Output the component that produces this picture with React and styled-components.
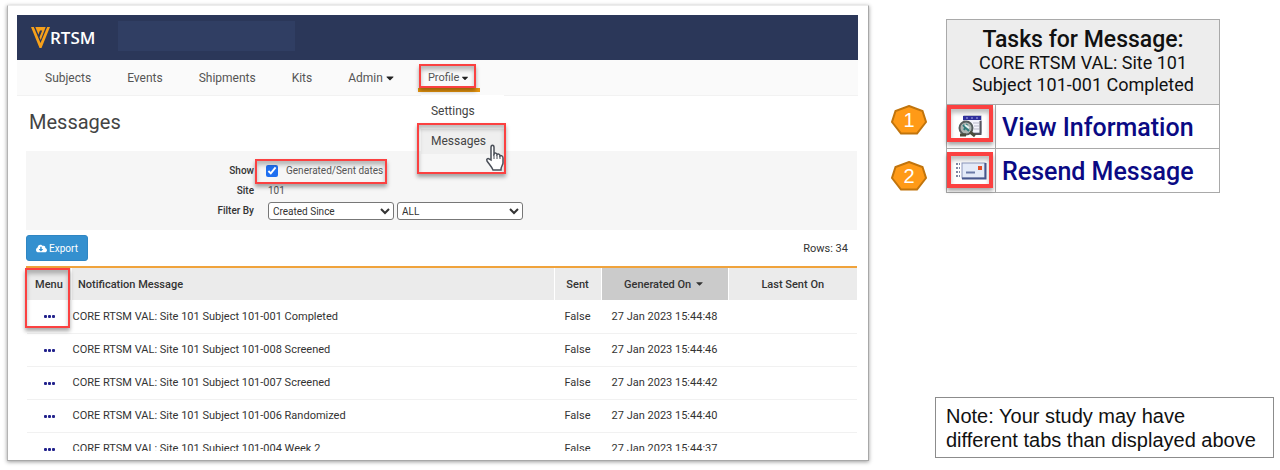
import styled, { createGlobalStyle, css } from 'styled-components';
import { FaCloudDownloadAlt, FaCaretDown } from 'react-icons/fa';

const GlobalStyle = createGlobalStyle`
  * {
    box-sizing: border-box;
  }

  body {
    margin: 0;
    background: #fff;
    color: #333;
    font-family: Roboto, "Liberation Sans", sans-serif;
    font-size: 11px;
  }
`;

// ------------------------------
// Page
// ------------------------------

const Page = styled.div`
  display: grid;
  grid-template-columns: minmax(0, 862fr) minmax(0, 405fr);
  padding: 5px 6px 9px 7px;
`;

const Screen = styled.main`
  padding: 9px 10px 9px 9px;
  border: 1px solid #ccc;
  border-color: #ececec #a8a8a8 #a8a8a8 #b4b4b4;
  box-shadow: 0 1px 4px rgba(0, 0, 0, 0.4);
`;

const Side = styled.aside`
  display: flex;
  flex-direction: column;
  justify-content: space-between;
  padding: 14px 0 3px;
`;

// Red marker drawn over a control
const Marker = styled.span`
  position: absolute;
  inset: ${props => props.$inset || '0'};
  border: ${props => (props.$thick ? 4 : 2)}px solid #fb4141;
  box-shadow: 0 3px 4px rgba(0, 0, 0, 0.35), inset 0 4px 4px rgba(0, 0, 0, 0.25);
  pointer-events: none;
  z-index: 2;
`;

// ------------------------------
// Header and navigation
// ------------------------------

const TopBar = styled.header`
  display: flex;
  align-items: center;
  height: 45px;
  padding: 0 14px;
  background: #2b3759;
`;

const Brand = styled.a`
  display: flex;
  align-items: center;
  width: 87px;
  color: #fff;
  font-family: "Open Sans", sans-serif;
  font-size: 17px;
  font-weight: 600;
  line-height: 24px;
  text-decoration: none;
`;

const StudyBox = styled.div`
  width: 177px;
  height: 30px;
  margin-bottom: 4px;
  background: #303e63;
`;

const Nav = styled.nav`
  display: flex;
  align-items: center;
  gap: 36px;
  height: 36px;
  padding-left: 28px;
  background: #fafafa;
  border-bottom: 1px solid #f2f2f2;
`;

const NavLink = styled.a`
  display: flex;
  align-items: center;
  gap: 1px;
  color: #555;
  font-size: ${props => (props.$small ? 11 : 12)}px;
  line-height: 20px;
  text-decoration: none;

  svg {
    color: #222;
  }
`;

const NavItem = styled.div`
  position: relative;
  display: flex;
  align-items: center;
  height: 35px;
  padding: 0 10px;
  margin-left: -14px;

  &::after {
    content: "";
    position: absolute;
    left: 0;
    right: 0;
    bottom: 3px;
    height: 4px;
    background: #e8960f;
  }
`;

const SubMenu = styled.ul`
  position: absolute;
  top: 35px;
  left: 3px;
  width: 83px;
  margin: 0;
  padding: 1px 0 0;
  background: #fff;
  list-style: none;
  z-index: 1;
`;

const SubMenuItem = styled.li`
  position: relative;
  padding: ${props => (props.$active ? '2px 10px' : '5px 10px')};
  background: ${props => (props.$active ? '#efefef' : '#fff')};
  line-height: 20px;
  margin-bottom: ${props => (props.$active ? '0' : '2px')};

  a {
    color: #444;
    font-size: 12px;
    text-decoration: none;
  }
`;

const Pointer = styled.svg`
  position: absolute;
  left: 64px;
  top: 15px;
  z-index: 3;
`;

// ------------------------------
// Filters
// ------------------------------

const Content = styled.div`
  height: 355px;
  padding: 0 1px 0 9px;
  overflow: hidden;
`;

const Title = styled.h1`
  margin: 0;
  padding: 12px 3px 14px;
  color: #444;
  font-size: 20px;
  font-weight: 400;
  line-height: 29px;
`;

const Filters = styled.form`
  display: grid;
  grid-template-columns: 228px minmax(0, 1fr);
  column-gap: 14px;
  align-content: start;
  height: 79px;
  padding-top: 10px;
  background: #f6f6f6;
  font-size: 10px;
  line-height: 20px;
`;

const FilterLabel = styled.label`
  font-weight: 500;
  text-align: right;
`;

const FilterField = styled.div`
  display: flex;
  align-items: center;
  gap: 3px;
  color: #555;
`;

const CheckField = styled.div`
  position: relative;
  display: flex;
  align-items: center;
  gap: 8px;
  margin-left: -2px;
`;

const Checkbox = styled.input`
  width: 12px;
  height: 12px;
  margin: 0;
  accent-color: #1f6ff0;
`;

const Select = styled.select`
  width: 126px;
  height: 18px;
  padding: 0;
  border: 1px solid #777;
  border-radius: 3px;
  background: #fff;
  color: #333;
  font-family: inherit;
  font-size: 10px;
`;

const ActionBar = styled.div`
  display: flex;
  align-items: center;
  justify-content: space-between;
  height: 36px;
  padding-right: 9px;
`;

const ExportButton = styled.button`
  display: flex;
  align-items: center;
  justify-content: center;
  gap: 2px;
  width: 62px;
  height: 26px;
  padding: 0;
  border: 1px solid #2f86c3;
  border-radius: 3px;
  background: #3490cf;
  color: #fff;
  font-family: inherit;
  font-size: 10px;
`;

// ------------------------------
// Messages table
// ------------------------------

const Table = styled.table`
  width: 100%;
  border-collapse: collapse;
  border-top: 2px solid #f0a33c;
  table-layout: fixed;
`;

const Th = styled.th`
  position: relative;
  width: ${props => props.$width || 'auto'};
  height: 33px;
  padding: 0 ${props => (props.$left ? 6 : 0)}px;
  border-left: 1px solid #fff;
  background: ${props => (props.$sorted ? '#cbcbcb' : '#ebebeb')};
  font-size: 11px;
  font-weight: 500;
  text-align: ${props => (props.$left ? 'left' : 'center')};
  white-space: nowrap;

  svg {
    vertical-align: -1px;
  }
`;

const Td = styled.td`
  height: 33px;
  padding: 0 1px;
  border-bottom: 1px solid #f1f1f1;
  font-size: 11px;
  text-align: ${props => (props.$center ? 'center' : 'left')};
  white-space: nowrap;
`;

const RowMenu = styled.button`
  display: inline-flex;
  gap: 1px;
  padding: 4px;
  border: 0;
  background: none;
  vertical-align: middle;

  i {
    width: 3px;
    height: 3px;
    border-radius: 1px;
    background: #22228c;
  }
`;

// ------------------------------
// Message tasks
// ------------------------------

const Tasks = styled.section`
  display: flex;
  gap: 19px;
  padding: 0 54px 0 22px;
`;

const Steps = styled.div`
  display: flex;
  flex-direction: column;
  gap: 26px;
  padding-top: 86px;
`;

const StepBadge = styled.div`
  position: relative;
  width: 36px;
  height: 30px;
  color: #fff;
  font: 20px/31px "Liberation Sans", Arial, sans-serif;
  text-align: center;

  svg {
    position: absolute;
    inset: 0;
  }

  span {
    position: relative;
  }
`;

const TaskTable = styled.table`
  flex: 1;
  border-collapse: collapse;
  color: #111;
`;

const taskCell = css`
  border: 1px solid #a9a9a9;
  padding: 0;
`;

const TaskHead = styled.th`
  ${taskCell}
  height: 85px;
  background: #ededed;
  font-size: 18px;
  font-weight: 400;
  line-height: 22px;

  strong {
    display: block;
    font-size: 23px;
    font-weight: 500;
    line-height: 24px;
  }
`;

const TaskIcon = styled.td`
  ${taskCell}
  position: relative;
  width: 49px;
  height: 44px;
  text-align: center;

  > svg {
    display: block;
    margin: 0 auto;
  }
`;

const TaskName = styled.td`
  ${taskCell}
  padding: 2px 0 0 6px;
  white-space: nowrap;

  a {
    color: #0a0a84;
    font-size: 25px;
    font-weight: 500;
    line-height: 30px;
    text-decoration: none;
  }
`;

const Note = styled.p`
  margin: 0 0 0 66px;
  padding: 6px 10px 5px;
  border: 1px solid #8c8c8c;
  color: #111;
  font-family: "Liberation Sans", Arial, sans-serif;
  font-size: 20px;
  line-height: 24px;
`;

const messages = [
  { text: 'CORE RTSM VAL: Site 101 Subject 101-001 Completed', generated: '27 Jan 2023 15:44:48' },
  { text: 'CORE RTSM VAL: Site 101 Subject 101-008 Screened', generated: '27 Jan 2023 15:44:46' },
  { text: 'CORE RTSM VAL: Site 101 Subject 101-007 Screened', generated: '27 Jan 2023 15:44:42' },
  { text: 'CORE RTSM VAL: Site 101 Subject 101-006 Randomized', generated: '27 Jan 2023 15:44:40' },
  { text: 'CORE RTSM VAL: Site 101 Subject 101-004 Week 2', generated: '27 Jan 2023 15:44:37' },
];

function Step({ number }) {
  return (
    <StepBadge>
      <svg width="36" height="30" viewBox="0 0 36 30" aria-hidden="true">
        <path
          d="M18 1L31.500 6L35 17L26 28.500H10L1 17L4.500 6Z"
          fill="#ff9a17"
          stroke="#c1740c"
          strokeWidth="2"
        />
      </svg>
      <span>{number}</span>
    </StepBadge>
  );
}

function LogoMark() {
  return (
    <svg width="19" height="21" viewBox="0 0 19 21" aria-hidden="true">
      <path d="M0 0H2.800L9.500 16L16.200 0H19L10.500 21H8.500Z" fill="#f6a01a" />
      <path d="M4.300 0H14.700L9.700 13L8.500 10.200L11.200 3.500H9L8 6L7.500 7.700Z" fill="#f6a01a" />
    </svg>
  );
}

function ViewIcon() {
  return (
    <svg width="26" height="24" viewBox="0 0 26 24" aria-hidden="true">
      <rect x="6" y="1" width="17" height="17" fill="#f4f4fb" stroke="#8e8ea8" />
      <path d="M5 1H23V5H5Z" fill="#30309c" />
      <path d="M8 3H10M13 3H15M18 3H20" stroke="#a9a9e8" />
      <path d="M15 8H21M16 11H21M16 14H21" stroke="#b9b9c9" />
      <path d="M22.500 6V19H14" fill="none" stroke="#55555e" strokeWidth="2" />
      <circle cx="8" cy="13" r="6.500" fill="#aeb5b2" stroke="#555d5d" strokeWidth="2" />
      <path d="M5 10L11 16M6 15L9 9" stroke="#2e7b7b" strokeWidth="2" />
      <path d="M7 10L11 13" stroke="#e6f4f2" strokeWidth="2" />
      <path d="M12 17L17 21M2 20H8" stroke="#4b4b3b" strokeWidth="3" />
    </svg>
  );
}

function MailIcon() {
  return (
    <svg width="32" height="20" viewBox="0 0 32 20" aria-hidden="true">
      <path d="M1 3H5M1 7H5M1 11H5M1 15H5" stroke="#7f86a3" strokeWidth="2" strokeDasharray="2 1" />
      <rect x="7" y="2" width="23" height="15" fill="#e4ebf8" stroke="#8b97bb" />
      <path d="M7 17.500H30.500V2" fill="none" stroke="#48598e" strokeWidth="2" />
      <path d="M11 11.500H20" stroke="#6b7ba8" strokeWidth="2" />
      <rect x="23" y="5" width="4" height="4" fill="#e34c26" />
    </svg>
  );
}

export default function App() {
  return (
    <>
      <GlobalStyle />
      <Page>
        <Screen>
          <TopBar>
            <Brand href="#">
              <LogoMark />
              RTSM
            </Brand>
            <StudyBox />
          </TopBar>
          <Nav>
            <NavLink href="#">Subjects</NavLink>
            <NavLink href="#">Events</NavLink>
            <NavLink href="#">Shipments</NavLink>
            <NavLink href="#">Kits</NavLink>
            <NavLink href="#">
              Admin <FaCaretDown size={12} />
            </NavLink>
            <NavItem>
              <NavLink href="#" $small>
                Profile <FaCaretDown size={10} />
              </NavLink>
              <Marker $inset="4px 4px 7px 1px" />
              <SubMenu>
                <SubMenuItem>
                  <a href="#">Settings</a>
                </SubMenuItem>
                <SubMenuItem $active>
                  <a href="#">Messages</a>
                  <Marker $inset="-6px -2px -20px -4px" />
                  <Pointer width="19" height="28" viewBox="0 0 19 28" aria-hidden="true">
                    <path
                      d="M6 16V3.500C6 .5 9 .5 9 3.500V10C10 8.500 12 9 12 10.500C13 9.500 15 10 15 12C16 11 18 12 18 14V19C18 21 16 22 16 26H8C7 23 4 20 2 17C1 15 3 14 4 15Z"
                      fill="#fff"
                      stroke="#4a4f58"
                      strokeWidth="1.500"
                    />
                    <path d="M9 10V15M12 11V15M15 12V15" stroke="#4a4f58" />
                  </Pointer>
                </SubMenuItem>
              </SubMenu>
            </NavItem>
          </Nav>

          <Content>
            <Title>Messages</Title>
            <Filters>
              <FilterLabel htmlFor="dates">Show</FilterLabel>
              <FilterField>
                <CheckField>
                  <Checkbox id="dates" type="checkbox" defaultChecked />
                  <label htmlFor="dates">Generated/Sent dates</label>
                  <Marker $inset="-2px -4px -3px -11px" />
                </CheckField>
              </FilterField>
              <FilterLabel as="span">Site</FilterLabel>
              <FilterField>101</FilterField>
              <FilterLabel htmlFor="filter">Filter By</FilterLabel>
              <FilterField>
                <Select id="filter">
                  <option>Created Since</option>
                </Select>
                <Select aria-label="Period">
                  <option>ALL</option>
                </Select>
              </FilterField>
            </Filters>
            <ActionBar>
              <ExportButton type="button">
                <FaCloudDownloadAlt size={11} />
                Export
              </ExportButton>
              <span>Rows: 34</span>
            </ActionBar>
            <Table>
              <thead>
                <tr>
                  <Th $width="45px">
                    Menu
                    <Marker $inset="0 1px -28px -2px" />
                  </Th>
                  <Th $left>Notification Message</Th>
                  <Th $width="47px">Sent</Th>
                  <Th $width="127px" $sorted>
                    Generated On <FaCaretDown size={11} />
                  </Th>
                  <Th $width="129px">Last Sent On</Th>
                </tr>
              </thead>
              <tbody>
                {messages.map(message => (
                  <tr key={message.text}>
                    <Td $center>
                      <RowMenu type="button" aria-label="Message menu">
                        <i />
                        <i />
                        <i />
                      </RowMenu>
                    </Td>
                    <Td>{message.text}</Td>
                    <Td $center>False</Td>
                    <Td $center>{message.generated}</Td>
                    <Td />
                  </tr>
                ))}
              </tbody>
            </Table>
          </Content>
        </Screen>

        <Side>
          <Tasks>
            <Steps>
              <Step number={1} />
              <Step number={2} />
            </Steps>
            <TaskTable>
              <thead>
                <tr>
                  <TaskHead colSpan={2}>
                    <strong>Tasks for Message:</strong>
                    CORE RTSM VAL: Site 101
                    <br />
                    Subject 101-001 Completed
                  </TaskHead>
                </tr>
              </thead>
              <tbody>
                <tr>
                  <TaskIcon>
                    <ViewIcon />
                    <Marker $thick $inset="0 2px 6px 0" />
                  </TaskIcon>
                  <TaskName>
                    <a href="#">View Information</a>
                  </TaskName>
                </tr>
                <tr>
                  <TaskIcon>
                    <MailIcon />
                    <Marker $thick $inset="3px 2px 4px 0" />
                  </TaskIcon>
                  <TaskName>
                    <a href="#">Resend Message</a>
                  </TaskName>
                </tr>
              </tbody>
            </TaskTable>
          </Tasks>
          <Note>
            Note: Your study may have
            <br />
            different tabs than displayed above
          </Note>
        </Side>
      </Page>
    </>
  );
}
